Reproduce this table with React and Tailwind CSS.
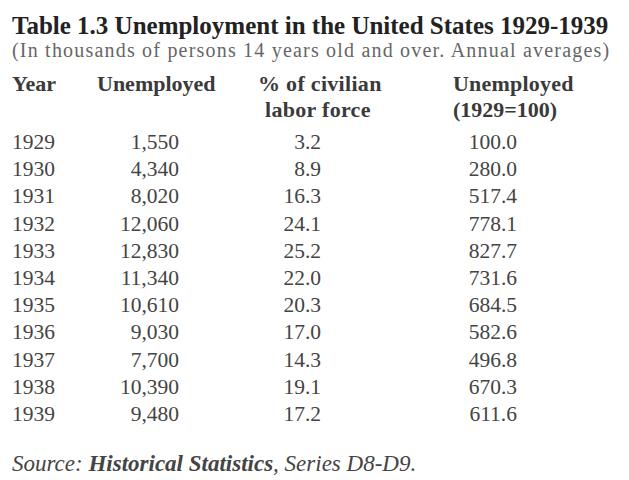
const rows = [
    ['1929', '1,550', '3.2', '100.0'],
    ['1930', '4,340', '8.9', '280.0'],
    ['1931', '8,020', '16.3', '517.4'],
    ['1932', '12,060', '24.1', '778.1'],
    ['1933', '12,830', '25.2', '827.7'],
    ['1934', '11,340', '22.0', '731.6'],
    ['1935', '10,610', '20.3', '684.5'],
    ['1936', '9,030', '17.0', '582.6'],
    ['1937', '7,700', '14.3', '496.8'],
    ['1938', '10,390', '19.1', '670.3'],
    ['1939', '9,480', '17.2', '611.6'],
];

export default function App() {
    return (
        <div className="w-[629px] h-[480px] bg-white overflow-hidden pl-[12px] pt-[13px] font-['Liberation_Serif',serif] text-[#444]">
            {/* Title */}
            <h1 className="text-[25px] leading-[26px] font-bold text-[#222] whitespace-nowrap">
                Table 1.3 Unemployment in the United States 1929-1939
            </h1>
            <p className="mt-[1px] text-[20px] leading-[20px] tracking-[1.2px] text-[#666] whitespace-nowrap">
                (In thousands of persons 14 years old and over. Annual averages)
            </p>

            {/* Header */}
            <div className="flex mt-[12px] text-[22px] leading-[24px] font-bold text-[#3a3a3a] whitespace-nowrap">
                <div className="w-[85px]">Year</div>
                <div className="w-[161px]">Unemployed</div>
                <div className="w-[195px] flex flex-col gap-[2px]">
                    <div className="tracking-[0.3px]">% of civilian</div>
                    <div className="pl-[7px] tracking-[0.3px]">labor force</div>
                </div>
                <div className="flex flex-col gap-[2px]">
                    <div className="tracking-[0.2px]">Unemployed</div>
                    <div>(1929=100)</div>
                </div>
            </div>

            {/* Data */}
            <div className="mt-[7px] text-[21.5px] leading-[27.2px]">
                {rows.map((r) => (
                    <div key={r[0]} className="flex">
                        <div className="w-[60px]">{r[0]}</div>
                        <div className="w-[107px] text-right">{r[1]}</div>
                        <div className="w-[142px] text-right">{r[2]}</div>
                        <div className="w-[196px] text-right">{r[3]}</div>
                    </div>
                ))}
            </div>

            {/* Source */}
            <p className="mt-[23px] text-[23px] leading-[26px] italic text-[#444] whitespace-nowrap">
                Source: <span className="font-bold">Historical Statistics</span>, Series D8-D9.
            </p>
        </div>
    );
}
